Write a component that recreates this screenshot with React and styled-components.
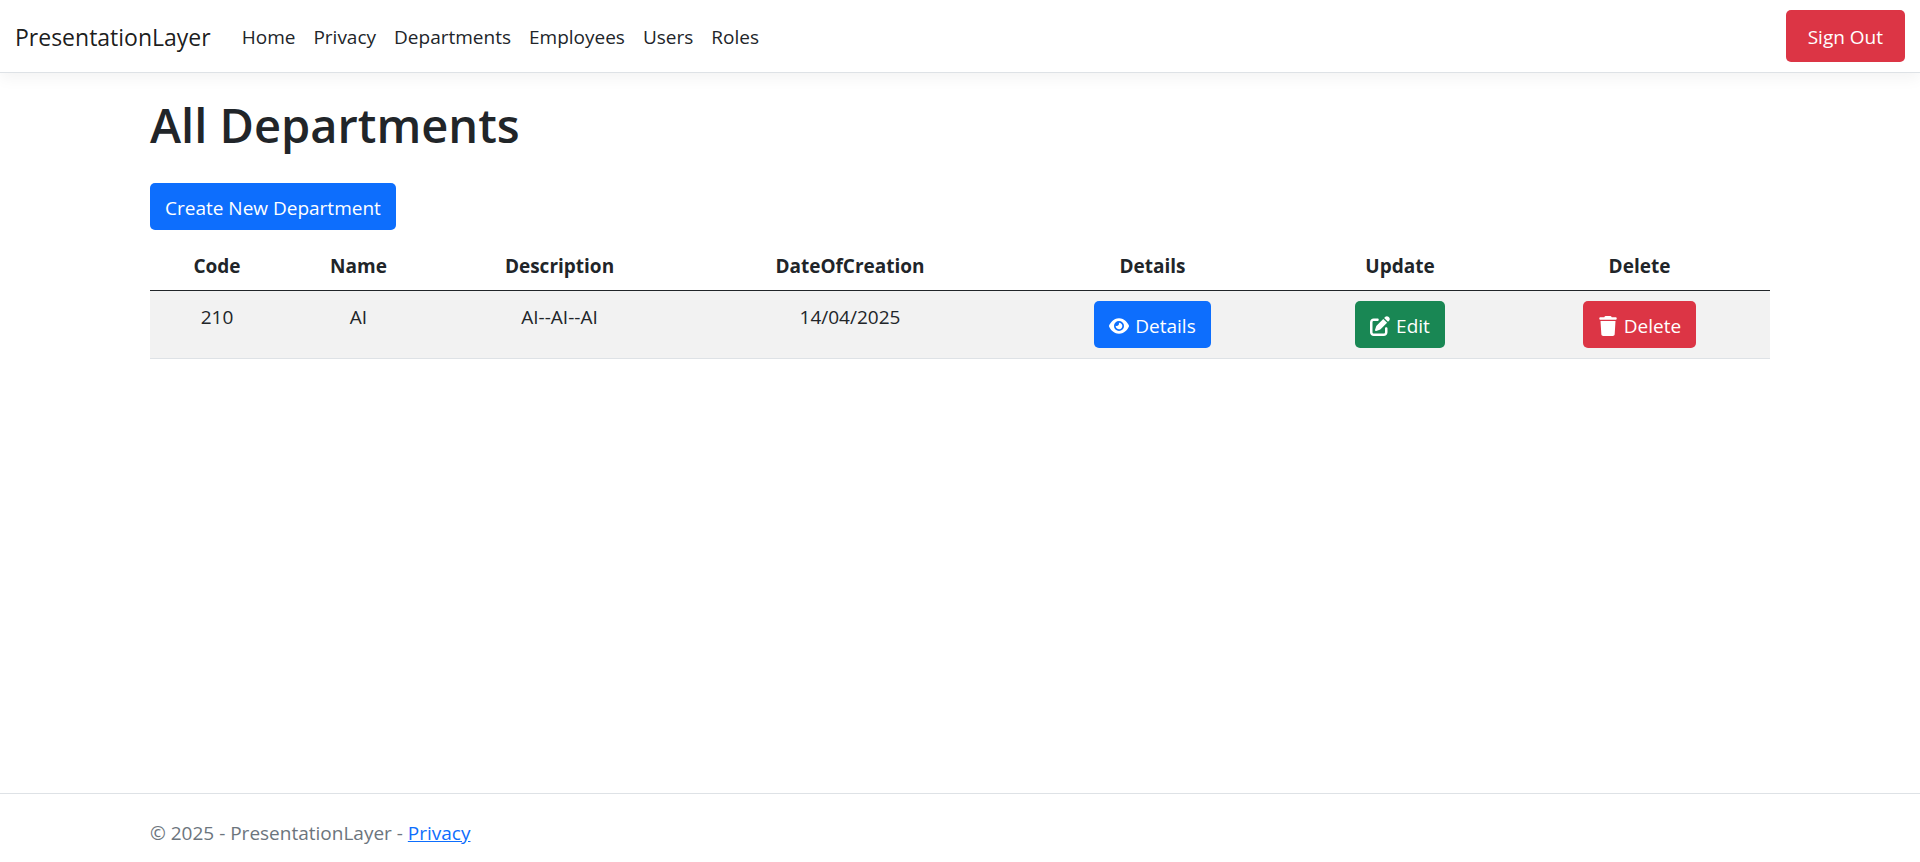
import React from "react";
import styled, { createGlobalStyle, css } from "styled-components";
import { FaEye, FaPenToSquare, FaTrash } from "react-icons/fa6";

const colors = {
  text: "#212529",
  muted: "#6c757d",
  border: "#dee2e6",
  blue: "#0d6efd",
  green: "#198754",
  red: "#dc3545",
  stripe: "#f2f2f2",
};

const GlobalStyle = createGlobalStyle`
  *, *::before, *::after { box-sizing: border-box; }
  body {
    margin: 0;
    background: #fff;
    color: ${colors.text};
    font-family: "Segoe UI", "Open Sans", "Noto Sans", sans-serif;
    font-size: 19px;
    line-height: 30px;
  }
`;

const Page = styled.div`
  display: flex;
  flex-direction: column;
  min-height: 100vh;
`;

const Header = styled.header`
  display: flex;
  align-items: center;
  padding: 10px 15px;
  border-bottom: 1px solid ${colors.border};
  box-shadow: 0 5px 15px rgba(0, 0, 0, 0.05);
`;

const Brand = styled.a`
  margin-right: 22px;
  padding-top: 2px;
  color: rgba(0, 0, 0, 0.9);
  font-size: 23px;
  text-decoration: none;
`;

const Nav = styled.nav`
  flex: 1;
`;

const NavList = styled.ul`
  display: flex;
  margin: 0;
  padding: 0;
  list-style: none;
`;

const NavLink = styled.a`
  display: block;
  padding: 11px 9px 9px;
  color: ${colors.text};
  text-decoration: none;
`;

const buttonStyle = css`
  display: inline-flex;
  align-items: center;
  justify-content: center;
  gap: 6px;
  height: 47px;
  padding: 2px 15px 0;
  border: 0;
  border-radius: 5px;
  background: ${(p) => colors[p.$tone]};
  color: #fff;
  font: inherit;
  text-decoration: none;
  white-space: nowrap;
  cursor: pointer;

  svg {
    height: 20px;
    width: auto;
  }
`;

const ButtonLink = styled.a`
  ${buttonStyle}
`;

const SignOutButton = styled.button`
  ${buttonStyle}
  height: 52px;
  padding: 2px 22px 0;
`;

const Container = styled.div`
  width: 100%;
  max-width: 1650px;
  margin: 0 auto;
  padding: 0 15px;
`;

const Main = styled.main`
  flex: 1;
  padding: 22px 0;
`;

const Title = styled.h1`
  margin: 0 0 28px;
  font-size: 47px;
  font-weight: 600;
  line-height: 60px;
`;

const Table = styled.table`
  width: 100%;
  margin-top: 10px;
  border-collapse: separate;
  border-spacing: 0;
  table-layout: fixed;
  text-align: center;
`;

const Column = styled.col`
  width: ${(p) => p.$width}px;
`;

const HeadCell = styled.th`
  padding: 11px 10px 9px;
  border-bottom: 1px solid ${colors.text};
  font-weight: 700;
`;

const Cell = styled.td`
  height: 68px;
  padding: ${(p) => (p.$action ? 10 : 11)}px 10px 0;
  border-bottom: 1px solid ${colors.border};
  background: ${colors.stripe};
  vertical-align: top;
`;

const Footer = styled.footer`
  padding: 24px 0 14px;
  border-top: 1px solid ${colors.border};
  color: ${colors.muted};
`;

const FooterLink = styled.a`
  color: ${colors.blue};
`;

const navItems = ["Home", "Privacy", "Departments", "Employees", "Users", "Roles"];

const columns = [
  { label: "Code", width: 134 },
  { label: "Name", width: 149 },
  { label: "Description", width: 253 },
  { label: "DateOfCreation", width: 328 },
  { label: "Details", width: 277 },
  { label: "Update", width: 218 },
  { label: "Delete", width: 261 },
];

const departments = [
  { code: "210", name: "AI", description: "AI--AI--AI", created: "14/04/2025" },
];

export default function App() {
  return (
    <Page>
      <GlobalStyle />
      <Header>
        <Brand href="#">PresentationLayer</Brand>
        <Nav>
          <NavList>
            {navItems.map((item) => (
              <li key={item}>
                <NavLink href="#">{item}</NavLink>
              </li>
            ))}
          </NavList>
        </Nav>
        <SignOutButton type="button" $tone="red">Sign Out</SignOutButton>
      </Header>
      <Main>
        <Container>
          <Title>All Departments</Title>
          <ButtonLink href="#" $tone="blue">Create New Department</ButtonLink>
          <Table>
            <colgroup>
              {columns.map((c) => (
                <Column key={c.label} $width={c.width} />
              ))}
            </colgroup>
            <thead>
              <tr>
                {columns.map((c) => (
                  <HeadCell key={c.label} scope="col">{c.label}</HeadCell>
                ))}
              </tr>
            </thead>
            <tbody>
              {departments.map((d) => (
                <tr key={d.code}>
                  <Cell>{d.code}</Cell>
                  <Cell>{d.name}</Cell>
                  <Cell>{d.description}</Cell>
                  <Cell>{d.created}</Cell>
                  <Cell $action>
                    <ButtonLink href="#" $tone="blue"><FaEye />Details</ButtonLink>
                  </Cell>
                  <Cell $action>
                    <ButtonLink href="#" $tone="green"><FaPenToSquare />Edit</ButtonLink>
                  </Cell>
                  <Cell $action>
                    <ButtonLink href="#" $tone="red"><FaTrash />Delete</ButtonLink>
                  </Cell>
                </tr>
              ))}
            </tbody>
          </Table>
        </Container>
      </Main>
      <Footer>
        <Container>
          © 2025 - PresentationLayer - <FooterLink href="#">Privacy</FooterLink>
        </Container>
      </Footer>
    </Page>
  );
}
